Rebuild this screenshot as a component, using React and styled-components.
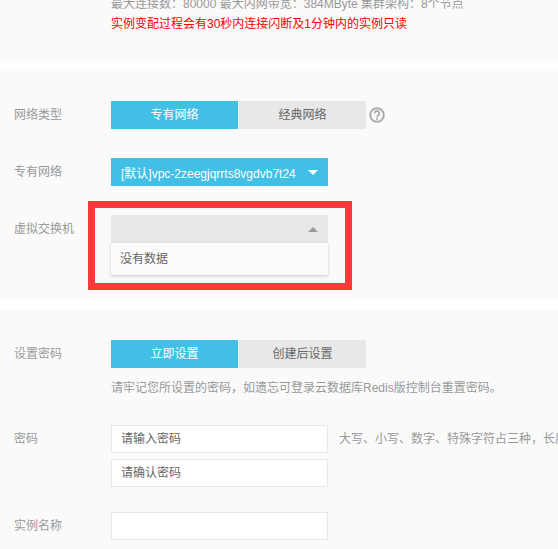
import styled, { createGlobalStyle } from "styled-components";

const GlobalStyle = createGlobalStyle`
  html, body {
    margin: 0;
    padding: 0;
    background: #fff;
    overflow: hidden;
  }
  body {
    font-family: "Liberation Sans", "Noto Sans CJK SC", sans-serif;
    font-size: 12px;
    color: #999;
  }
`;

const Page = styled.div`
  position: relative;
  width: 558px;
  height: 549px;
  overflow: hidden;
`;

const Section = styled.section`
  background: #fafafa;
  margin-bottom: 10px;
  height: ${(p) => p.$height}px;
  padding-top: ${(p) => p.$top || 0}px;
  box-sizing: border-box;
  overflow: hidden;
`;

const Notes = styled.div`
  margin-top: -6px;
  padding-left: 111px;
  white-space: nowrap;
`;

const Note = styled.p`
  margin: 0;
  height: 20px;
  line-height: 20px;
  color: ${(p) => (p.$warn ? "#f00" : "#999")};
`;

const Row = styled.div`
  display: flex;
  align-items: flex-start;
  margin-top: ${(p) => p.$before || 0}px;
  margin-bottom: ${(p) => p.$gap || 0}px;
  white-space: nowrap;
`;

const Label = styled.div`
  flex: none;
  width: 97px;
  padding-left: 14px;
  line-height: 28px;
  color: #999;
`;

const Field = styled.div`
  flex: none;
  display: flex;
  flex-direction: column;
`;

const Inline = styled.div`
  display: flex;
  align-items: center;
`;

const Toggle = styled.div`
  display: flex;
  gap: 1px;
`;

const ToggleButton = styled.div`
  width: 127px;
  height: 28px;
  line-height: 28px;
  text-align: center;
  background: ${(p) => (p.$active ? "#41bfe5" : "#e8e8e8")};
  color: ${(p) => (p.$active ? "#fff" : "#666")};
`;

const Help = styled.svg`
  width: 16px;
  height: 16px;
  margin-left: 3px;
`;

const Select = styled.div`
  width: 217px;
  height: 28px;
  box-sizing: border-box;
  padding: 0 10px;
  display: flex;
  align-items: center;
  justify-content: space-between;
  background: ${(p) => (p.$open ? "#e8e8e8" : "#41bfe5")};
  color: #fff;
`;

const Caret = styled.span`
  width: 0;
  height: 0;
  border-left: 5px solid transparent;
  border-right: 5px solid transparent;
  ${(p) =>
    p.$up
      ? "border-bottom: 5px solid #999;"
      : "border-top: 5px solid #fff;"}
`;

const Dropdown = styled.div`
  width: 217px;
  height: 32px;
  line-height: 32px;
  box-sizing: border-box;
  padding-left: 9px;
  background: #fcfcfc;
  color: #666;
  box-shadow: 0 1px 3px rgba(0, 0, 0, 0.2);
`;

const Hint = styled.p`
  margin: 10px 0 0;
  line-height: 20px;
  color: #999;
`;

const Input = styled.div`
  flex: none;
  width: 217px;
  height: 28px;
  line-height: 26px;
  box-sizing: border-box;
  border: 1px solid #e8e8e8;
  background: #fff;
  padding-left: 9px;
  color: #666;
  & + & {
    margin-top: 6px;
  }
`;

const SideNote = styled.span`
  margin-left: 11px;
  line-height: 28px;
  color: #999;
`;

const Highlight = styled.div`
  position: absolute;
  left: 88px;
  top: 201px;
  width: 264px;
  height: 89px;
  box-sizing: border-box;
  border: 7px solid #ff3838;
  pointer-events: none;
`;

export default function App() {
  return (
    <Page>
      <GlobalStyle />
      <Section $height={61}>
        <Notes>
          <Note>最大连接数：80000 最大内网带宽：384MByte 集群架构：8个节点</Note>
          <Note $warn>实例变配过程会有30秒内连接闪断及1分钟内的实例只读</Note>
        </Notes>
      </Section>
      <Section $height={229} $top={30}>
        <Row $gap={29}>
          <Label>网络类型</Label>
          <Inline>
            <Toggle>
              <ToggleButton $active>专有网络</ToggleButton>
              <ToggleButton>经典网络</ToggleButton>
            </Toggle>
            <Help viewBox="0 0 16 16" fill="none" stroke="#aaa">
              <circle cx="8" cy="8" r="6.8" strokeWidth="1.9" />
              <path d="M5.6 6.3a2.4 2.4 0 1 1 3.7 2c-.9.5-1.3 1-1.3 1.9" strokeWidth="1.7" />
              <path d="M8 11v1.7" strokeWidth="1.7" />
            </Help>
          </Inline>
        </Row>
        <Row $gap={29}>
          <Label>专有网络</Label>
          <Select>
            [默认]vpc-2zeegjqrrts8vgdvb7t24
            <Caret />
          </Select>
        </Row>
        <Row>
          <Label>虚拟交换机</Label>
          <Field>
            <Select $open>
              <span />
              <Caret $up />
            </Select>
            <Dropdown>没有数据</Dropdown>
          </Field>
        </Row>
      </Section>
      <Section $height={239} $top={30}>
        <Row>
          <Label>设置密码</Label>
          <Field>
            <Toggle>
              <ToggleButton $active>立即设置</ToggleButton>
              <ToggleButton>创建后设置</ToggleButton>
            </Toggle>
            <Hint>请牢记您所设置的密码，如遗忘可登录云数据库Redis版控制台重置密码。</Hint>
          </Field>
        </Row>
        <Row $before={27} $gap={25}>
          <Label>密码</Label>
          <Field>
            <Input>请输入密码</Input>
            <Input>请确认密码</Input>
          </Field>
          <SideNote>大写、小写、数字、特殊字符占三种，长度为8-16位</SideNote>
        </Row>
        <Row>
          <Label>实例名称</Label>
          <Input />
        </Row>
      </Section>
      <Highlight />
    </Page>
  );
}
